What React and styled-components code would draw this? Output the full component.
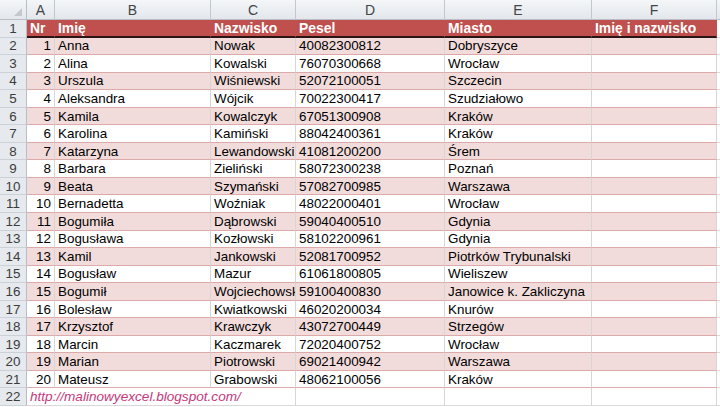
import React from "react";
import styled, { createGlobalStyle, css } from "styled-components";

// #region data
const columns = [
  { key: "corner", width: "27px" },
  { key: "A", width: "28px" },
  { key: "B", width: "156px" },
  { key: "C", width: "85px" },
  { key: "D", width: "149px" },
  { key: "E", width: "147px" },
  { key: "F", width: "125px" },
  { key: "G", width: "1fr" },
];

const headings = ["Nr", "Imię", "Nazwisko", "Pesel", "Miasto", "Imię i nazwisko"];

const people = [
  ["Anna", "Nowak", "40082300812", "Dobryszyce"],
  ["Alina", "Kowalski", "76070300668", "Wrocław"],
  ["Urszula", "Wiśniewski", "52072100051", "Szczecin"],
  ["Aleksandra", "Wójcik", "70022300417", "Szudziałowo"],
  ["Kamila", "Kowalczyk", "67051300908", "Kraków"],
  ["Karolina", "Kamiński", "88042400361", "Kraków"],
  ["Katarzyna", "Lewandowski", "41081200200", "Śrem"],
  ["Barbara", "Zieliński", "58072300238", "Poznań"],
  ["Beata", "Szymański", "57082700985", "Warszawa"],
  ["Bernadetta", "Woźniak", "48022000401", "Wrocław"],
  ["Bogumiła", "Dąbrowski", "59040400510", "Gdynia"],
  ["Bogusława", "Kozłowski", "58102200961", "Gdynia"],
  ["Kamil", "Jankowski", "52081700952", "Piotrków Trybunalski"],
  ["Bogusław", "Mazur", "61061800805", "Wieliszew"],
  ["Bogumił", "Wojciechowski", "59100400830", "Janowice k. Zakliczyna"],
  ["Bolesław", "Kwiatkowski", "46020200034", "Knurów"],
  ["Krzysztof", "Krawczyk", "43072700449", "Strzegów"],
  ["Marcin", "Kaczmarek", "72020400752", "Wrocław"],
  ["Marian", "Piotrowski", "69021400942", "Warszawa"],
  ["Mateusz", "Grabowski", "48062100056", "Kraków"],
];
// #endregion

// #region styled-components
const GlobalStyle = createGlobalStyle`
  html, body {
    margin: 0;
    padding: 0;
    background: #ffffff;
    overflow: hidden;
  }
`;

const Sheet = styled.div`
  display: grid;
  grid-template-columns: ${columns.map((c) => c.width).join(" ")};
  grid-template-rows: 20px repeat(22, 17.56px);
  width: 720px;
  height: 407px;
  overflow: hidden;
  font-family: "Liberation Sans", Arial, sans-serif;
  font-size: 13.4px;
  color: #000000;
`;

const Corner = styled.div`
  position: relative;
  box-sizing: border-box;
  background: linear-gradient(#f4f6f8, #e3e7ec);
  border-right: 1px solid #b9bec6;
  border-bottom: 1px solid #b9bec6;

  svg {
    position: absolute;
    right: 4px;
    bottom: 3px;
  }
`;

const ColHeader = styled.div`
  box-sizing: border-box;
  display: flex;
  align-items: center;
  justify-content: center;
  background: linear-gradient(#f4f6f8, #e3e7ec);
  border-right: 1px solid #c3c8cf;
  border-bottom: 1px solid #b9bec6;
  color: #444444;
  font-size: 14px;
`;

const RowHeader = styled.div`
  box-sizing: border-box;
  display: flex;
  align-items: center;
  justify-content: center;
  background: #e6e9ed;
  border-right: 1px solid #b9bec6;
  border-bottom: 1px solid #cdd1d7;
  color: #3c3c3c;
  font-size: 13.4px;
`;

const tones = {
  head: css`
    background: #c0504d;
    color: #ffffff;
    font-weight: bold;
    font-size: 13.9px;
    border-right-color: #c0504d;
    border-bottom: 2px solid #2a1414;
  `,
  band: css`
    background: #f2dcdb;
    border-bottom-color: #dcaaa9;
  `,
  plain: css`
    background: #ffffff;
    border-bottom-color: #dcaaa9;
  `,
  empty: css`
    background: #ffffff;
  `,
};

const Cell = styled.div`
  box-sizing: border-box;
  display: flex;
  align-items: center;
  justify-content: ${(p) => (p.$num ? "flex-end" : "flex-start")};
  padding: 0 3px;
  white-space: nowrap;
  overflow: hidden;
  border-right: 1px solid #d6d6d6;
  border-bottom: 1px solid #dadada;
  ${(p) => tones[p.$tone]}
`;

const LinkCell = styled(Cell)`
  grid-column: span 3;
  overflow: visible;
  color: #c8377a;
  font-style: italic;
  font-size: 13.6px;
`;
// #endregion

// #region component
const SelectAll = () => (
  <svg width="8" height="8" viewBox="0 0 8 8">
    <polygon points="8,0 8,8 0,8" fill="#c4c9d0" />
  </svg>
);

const App = () => {
  return (
    <>
      <GlobalStyle />
      <Sheet>
        <Corner>
          <SelectAll />
        </Corner>
        {columns.slice(1).map((c) => (
          <ColHeader key={c.key}>{c.key === "G" ? "" : c.key}</ColHeader>
        ))}

        <RowHeader>1</RowHeader>
        {headings.map((h) => (
          <Cell key={h} $tone="head">
            {h}
          </Cell>
        ))}
        <Cell $tone="empty" />

        {people.map((p, i) => {
          const tone = i % 2 === 0 ? "band" : "plain";
          return (
            <React.Fragment key={p[2]}>
              <RowHeader>{i + 2}</RowHeader>
              <Cell $tone={tone} $num>
                {i + 1}
              </Cell>
              {p.map((v, j) => (
                <Cell key={j} $tone={tone}>
                  {v}
                </Cell>
              ))}
              <Cell $tone={tone} />
              <Cell $tone="empty" />
            </React.Fragment>
          );
        })}

        <RowHeader>22</RowHeader>
        <LinkCell $tone="empty">http://malinowyexcel.blogspot.com/</LinkCell>
        <Cell $tone="empty" />
        <Cell $tone="empty" />
        <Cell $tone="empty" />
        <Cell $tone="empty" />
      </Sheet>
    </>
  );
};
// #endregion

export default App;
